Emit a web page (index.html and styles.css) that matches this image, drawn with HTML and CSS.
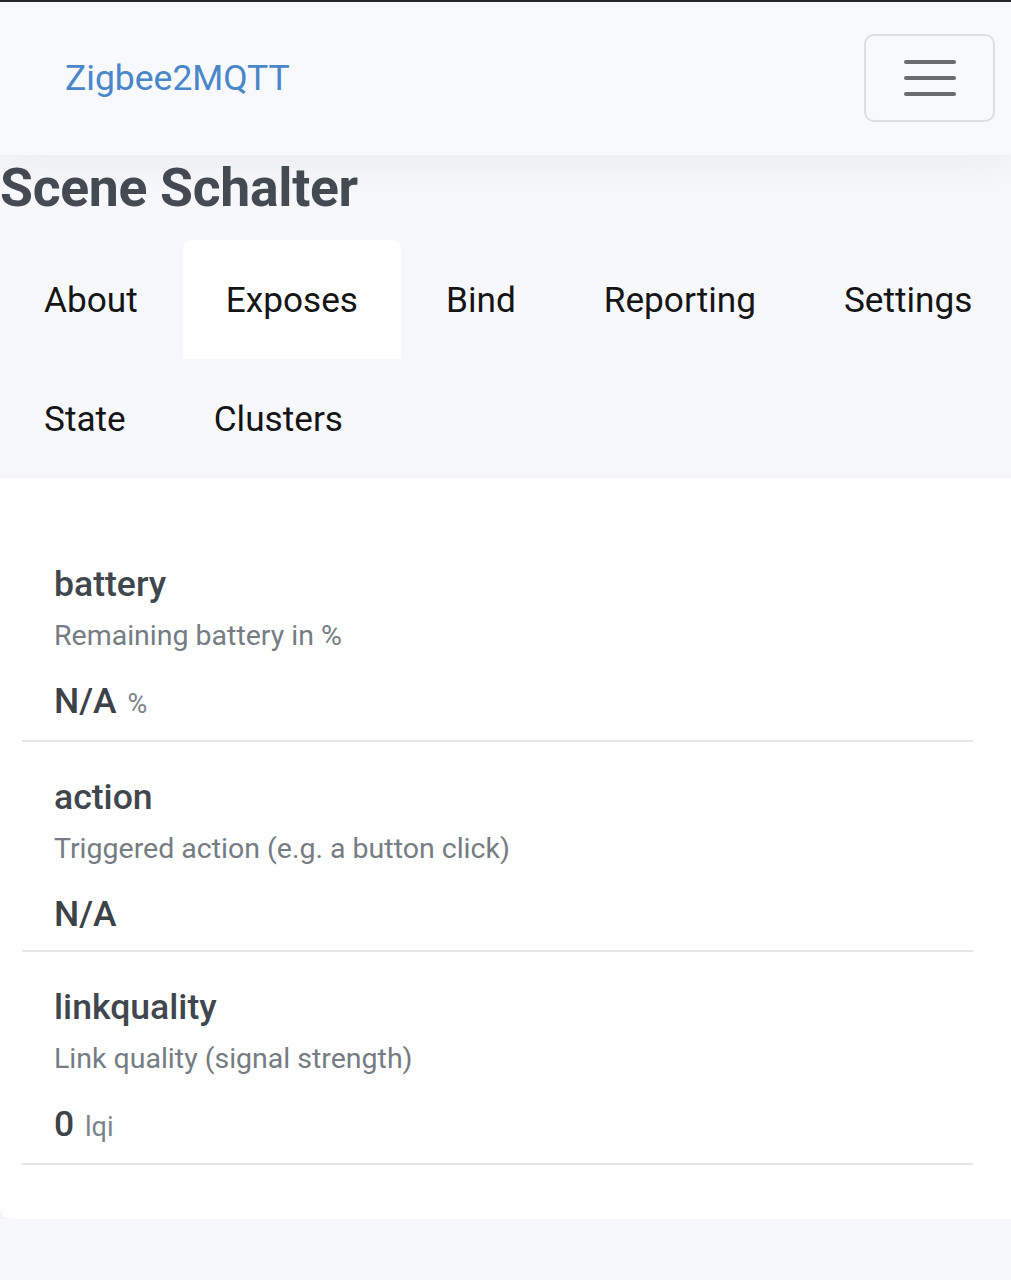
FILE: index.html
```html
<!DOCTYPE html>
<html lang="en">
<head>
<meta charset="utf-8">
<title>Zigbee2MQTT</title>
<link rel="stylesheet" href="styles.css">
</head>
<body>
<nav class="navbar">
  <a class="brand" href="#">Zigbee2MQTT</a>
  <button class="toggler" type="button" aria-label="Toggle navigation">
    <svg width="52" height="38" viewBox="0 0 52 38" aria-hidden="true">
      <g stroke="#6b6c6e" stroke-width="4" stroke-linecap="round">
        <line x1="2" y1="3" x2="50" y2="3"/>
        <line x1="2" y1="19" x2="50" y2="19"/>
        <line x1="2" y1="35" x2="50" y2="35"/>
      </g>
    </svg>
  </button>
</nav>
<main class="page">
  <h1 class="title">Scene Schalter</h1>
  <ul class="tabs">
    <li class="tab">About</li>
    <li class="tab active">Exposes</li>
    <li class="tab">Bind</li>
    <li class="tab">Reporting</li>
    <li class="tab">Settings</li>
    <li class="tab">State</li>
    <li class="tab">Clusters</li>
  </ul>
  <section class="card">
    <div class="item">
      <div class="name">battery</div>
      <div class="desc">Remaining battery in %</div>
      <div class="value">N/A <span class="unit">%</span></div>
    </div>
    <div class="item">
      <div class="name">action</div>
      <div class="desc">Triggered action (e.g. a button click)</div>
      <div class="value">N/A</div>
    </div>
    <div class="item">
      <div class="name">linkquality</div>
      <div class="desc">Link quality (signal strength)</div>
      <div class="value">0 <span class="unit">lqi</span></div>
    </div>
  </section>
</main>
</body>
</html>
```
FILE: styles.css
```css
html, body {
  margin: 0;
  padding: 0;
}
body {
  background: #f7f8fb;
  font-family: Roboto, "Noto Sans", sans-serif;
  overflow-x: hidden;
  border-top: 2px solid #23272b;
}
.navbar {
  height: 153px;
  background: #f8f9fc;
  display: flex;
  align-items: center;
  justify-content: space-between;
  padding: 0 16px 0 65px;
  box-shadow: 0 8px 40px rgba(0, 0, 0, 0.06);
  position: relative;
  z-index: 1;
}
.brand {
  color: #4a87c8;
  font-size: 35.5px;
  text-decoration: none;
  margin-top: -2px;
}
.toggler {
  width: 131px;
  height: 88px;
  background: transparent;
  border: 2px solid #dcdee1;
  border-radius: 10px;
  display: flex;
  align-items: center;
  justify-content: center;
  padding: 0;
  margin-top: -1px;
}
.page {
  position: relative;
}
.title {
  margin: 0;
  font-size: 53.5px;
  line-height: 65px;
  font-weight: 700;
  color: #454b52;
  letter-spacing: -0.3px;
}
.tabs {
  list-style: none;
  margin: 20px -40px 0 0;
  padding: 0 0 0 1px;
  display: flex;
  flex-wrap: wrap;
  gap: 0 2px;
}
.tab {
  font-size: 35.2px;
  line-height: 42px;
  padding: 39px 43px 38px;
  color: #151515;
  border-radius: 9px 9px 0 0;
}
.tab.active {
  background: #ffffff;
}
.card {
  background: #ffffff;
  margin-right: -30px;
  padding: 51px 68px 54px 22px;
  border-radius: 0 0 0 10px;
  box-shadow: 0 6px 24px rgba(0, 0, 0, 0.05);
}
.item {
  padding: 34px 32px 15px;
  border-bottom: 2px solid #e4e7e9;
}
.name {
  font-size: 35.6px;
  line-height: 42px;
  font-weight: 500;
  color: #40464d;
}
.desc {
  margin-top: 14px;
  font-size: 28.5px;
  line-height: 33px;
  color: #757c83;
}
.value {
  margin-top: 28px;
  font-size: 35.5px;
  line-height: 42px;
  font-weight: 500;
  color: #3c4248;
}
.unit {
  font-size: 27px;
  font-weight: 400;
  color: #7d838a;
  margin-left: 2px;
}
```
